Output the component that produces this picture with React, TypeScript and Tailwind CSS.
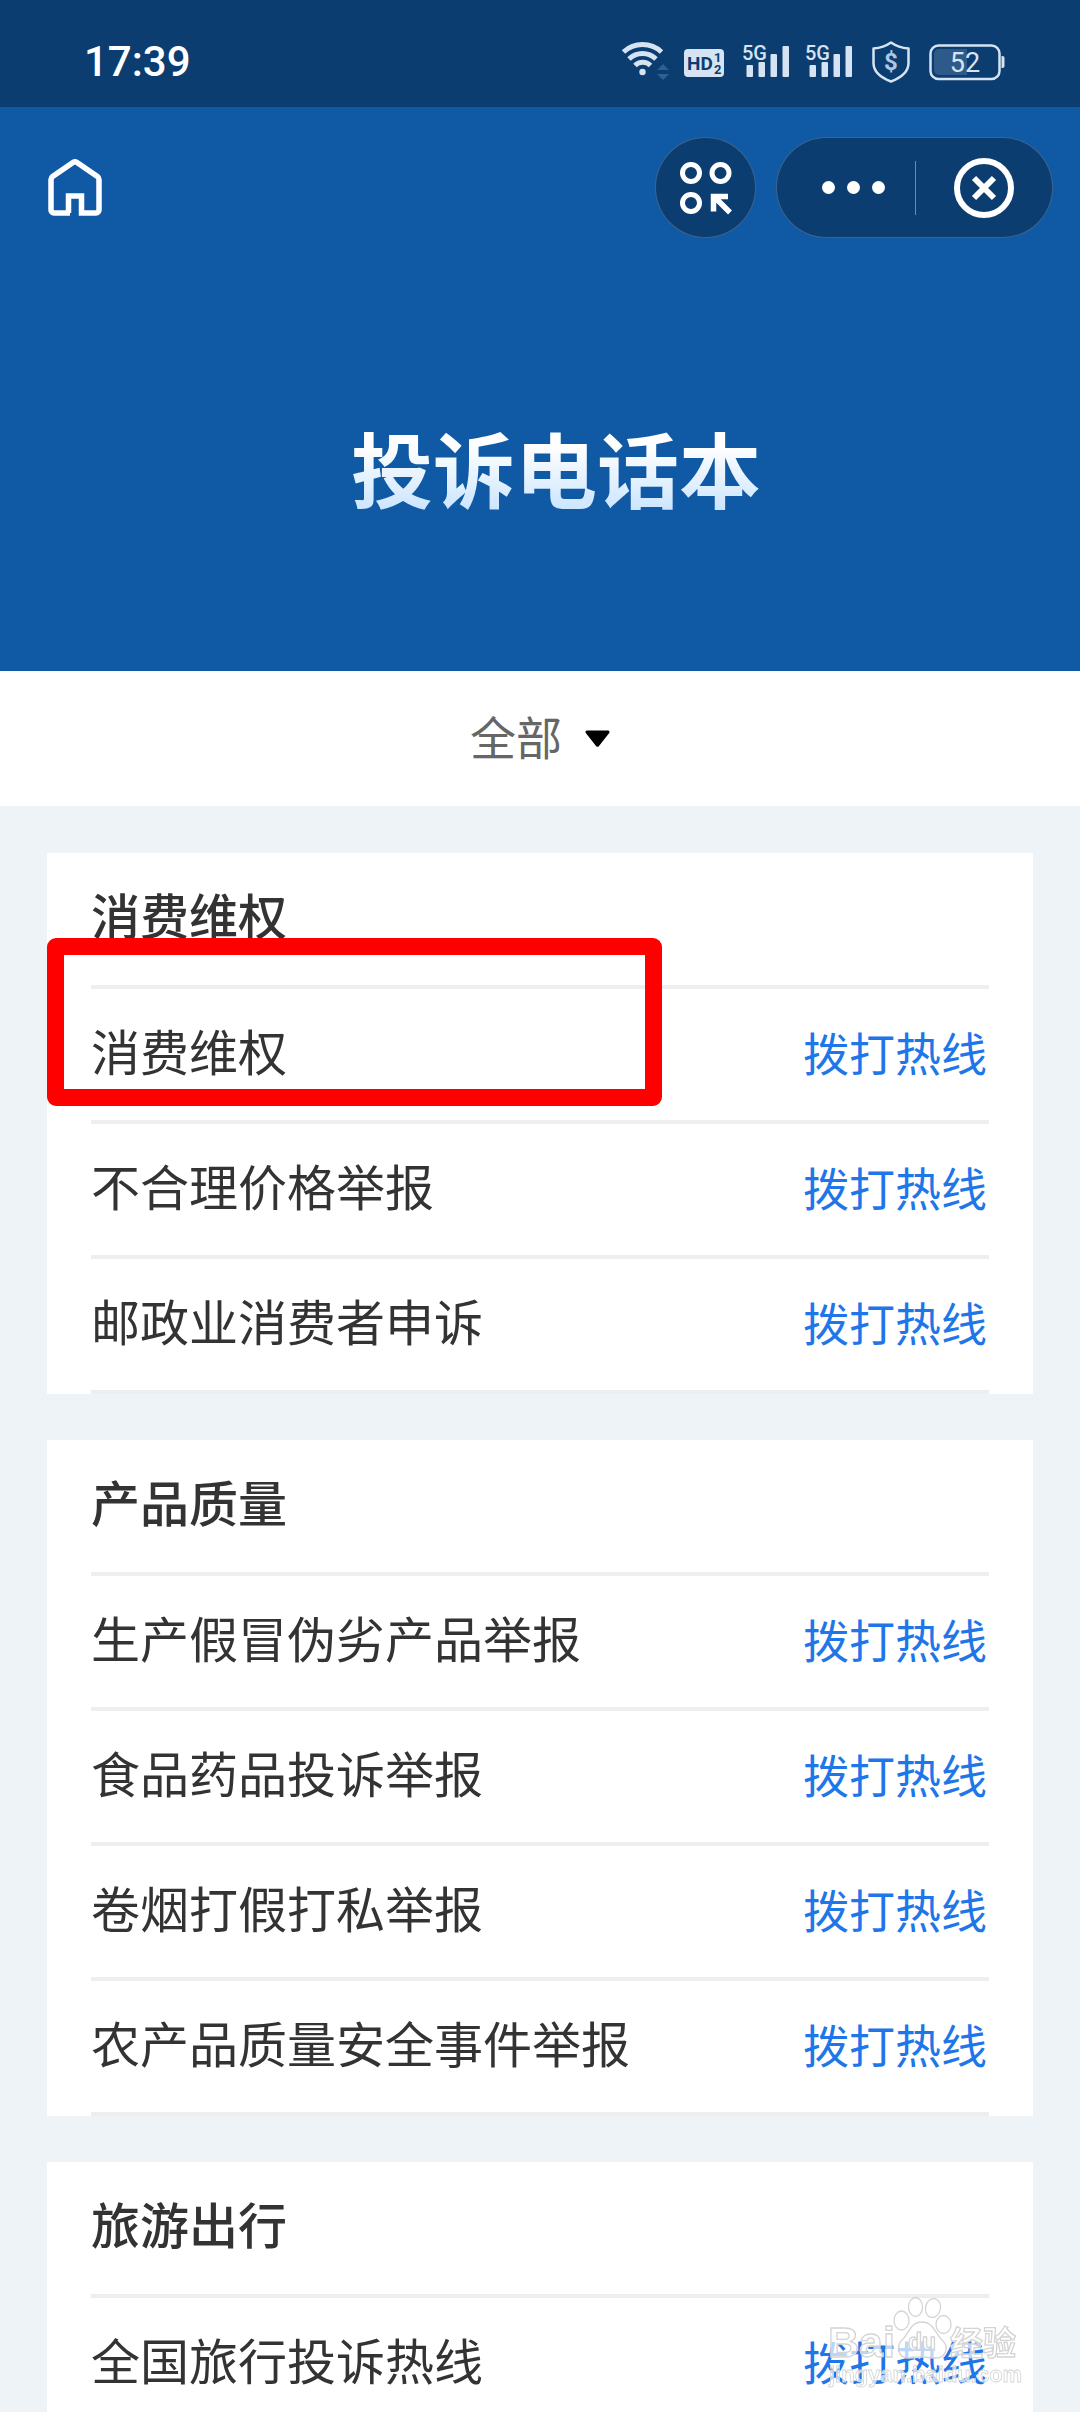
import { useState } from 'react';

const sections = [
  {
    title: '消费维权',
    highlight: true,
    items: ['消费维权', '不合理价格举报', '邮政业消费者申诉'],
  },
  {
    title: '产品质量',
    items: ['生产假冒伪劣产品举报', '食品药品投诉举报', '卷烟打假打私举报', '农产品质量安全事件举报'],
  },
  {
    title: '旅游出行',
    items: ['全国旅行投诉热线'],
  },
];

const WifiIcon = () => (
  <svg viewBox="0 0 48 42" className="w-12 h-[42px]" fill="none" stroke="#d6e3f3" strokeWidth="5" aria-hidden="true">
    <path d="M1.500 11a28 28 0 0 1 38 0" />
    <path d="M7 18a19.500 19.500 0 0 1 27 0" />
    <path d="M13 24.500a11 11 0 0 1 15.500 0" />
    <circle cx="20.500" cy="31" r="3.200" fill="#d6e3f3" stroke="none" />
    <path d="M35 29l6-6 6 6zM35 33l6 6 6-6z" fill="#2e5f94" stroke="none" />
  </svg>
);

const HdIcon = () => (
  <svg viewBox="0 0 40 42" className="w-10 h-[42px] ml-[14px]" aria-hidden="true">
    <rect y="8" width="40" height="28" rx="4" fill="#d6e3f3" />
    <g fill="#0b3d70" fontFamily="Roboto, sans-serif" fontWeight="700">
      <text x="3" y="29" fontSize="19">HD</text>
      <text x="30" y="21" fontSize="13">1</text>
      <text x="30" y="33" fontSize="13">2</text>
    </g>
  </svg>
);

const SignalIcon = ({ className }: { className: string }) => (
  <svg viewBox="0 0 47 42" className={className} fill="#d6e3f3" aria-hidden="true">
    <text x="-1" y="19" fontSize="20" fontWeight="500" fontFamily="Roboto, sans-serif">5G</text>
    <rect x="3.500" y="24" width="6.500" height="12" rx="1" />
    <rect x="15.500" y="21" width="6.500" height="15" rx="1" />
    <rect x="27.500" y="13" width="6.500" height="23" rx="1" />
    <rect x="39.500" y="5" width="6.500" height="31" rx="1" />
  </svg>
);

const ShieldIcon = () => (
  <svg viewBox="0 0 38 42" className="w-[38px] h-[42px] ml-[19px]" aria-hidden="true">
    <path
      d="M19 1.500C14 5 8 7 1.500 7.500V22c0 9 7 14.500 17.500 18.500C29.500 36.500 36.500 31 36.500 22V7.500C30 7 24 5 19 1.500z"
      fill="none"
      stroke="#d6e3f3"
      strokeWidth="2.500"
      strokeLinejoin="round"
    />
    <text x="19" y="29" textAnchor="middle" fontSize="24" fontWeight="700" fontFamily="Roboto, sans-serif" fill="#afc6e0">$</text>
  </svg>
);

const BatteryIcon = () => (
  <svg viewBox="0 0 77 42" className="w-[77px] h-[42px] ml-[19px]" aria-hidden="true">
    <rect x="1.500" y="4.500" width="69" height="33.500" rx="8" fill="none" stroke="#d6e3f3" strokeWidth="2.500" />
    <path d="M10 8h28v26H10a5 5 0 0 1-5-5V13a5 5 0 0 1 5-5z" fill="#2e5a89" />
    <path d="M72.500 15h1a2 2 0 0 1 2 2v8a2 2 0 0 1-2 2h-1z" fill="#d6e3f3" />
    <text x="36" y="31" textAnchor="middle" fontSize="27" fontFamily="Roboto, sans-serif" fill="#d6e3f3">52</text>
  </svg>
);

const StatusBar = () => (
  <div className="flex items-center justify-between h-[107px] bg-[#0b3d70] pl-[84px] pr-[74px] pt-[17px]">
    <span className="text-[42px] leading-[50px] font-medium text-white">17:39</span>
    <div className="flex items-center">
      <WifiIcon />
      <HdIcon />
      <SignalIcon className="w-[47px] h-[42px] ml-[19px]" />
      <SignalIcon className="w-[47px] h-[42px] ml-4" />
      <ShieldIcon />
      <BatteryIcon />
    </div>
  </div>
);

const NavBar = () => (
  <nav className="flex items-center justify-between pl-12 pr-[27px] pt-[30px]">
    <button aria-label="首页">
      <svg viewBox="0 0 54 58" className="w-[54px] h-[58px]" fill="none" stroke="white" strokeWidth="5.500">
        <path d="M22 54H6a3 3 0 0 1-3-3V20.500a4 4 0 0 1 1.600-3L24.600 3.700a4 4 0 0 1 4.800 0L49.400 17.500a4 4 0 0 1 1.600 3V51a3 3 0 0 1-3 3H33.500V37H20.500v17" />
      </svg>
    </button>
    <div className="flex gap-5">
      <button aria-label="小程序" className="flex items-center justify-center size-[101px] rounded-full bg-[#0b3d70] border border-white/20">
        <svg viewBox="0 0 54 54" className="size-[54px]" fill="none" stroke="white" strokeWidth="5">
          <circle cx="12" cy="12" r="8.500" />
          <circle cx="41.500" cy="12" r="8.500" />
          <circle cx="12" cy="42" r="8.500" />
          <path d="M49 35.500H34.500V50.500M35.500 36l15.500 15.500" strokeWidth="5.500" />
        </svg>
      </button>
      <div className="flex items-center w-[277px] h-[101px] rounded-full bg-[#0b3d70] border border-white/20">
        <button aria-label="更多" className="w-1/2 flex items-center justify-center gap-3 h-full pl-4">
          <span className="size-[13px] rounded-full bg-white" />
          <span className="size-[13px] rounded-full bg-white" />
          <span className="size-[13px] rounded-full bg-white" />
        </button>
        <span className="w-px h-[54px] bg-white/40" />
        <button aria-label="关闭" className="flex-1 flex items-center justify-center h-full">
          <svg viewBox="0 0 60 60" className="size-[60px]" fill="none" stroke="white" strokeWidth="6">
            <circle cx="30" cy="30" r="27" />
            <path d="M20 20l20 20M40 20L20 40" />
          </svg>
        </button>
      </div>
    </div>
  </nav>
);

const Watermark = () => (
  <svg viewBox="0 0 194 92" className="fixed right-[58px] bottom-6 w-[194px] h-[92px] pointer-events-none" aria-hidden="true">
    <g fill="white" fillOpacity="0.7" stroke="#d4d4d4" strokeWidth="1.300" fontFamily="'Liberation Sans', 'Noto Sans CJK SC', sans-serif" fontWeight="700">
      <ellipse cx="73.500" cy="24.500" rx="7.500" ry="9.500" />
      <ellipse cx="87.500" cy="11" rx="7" ry="9.500" />
      <ellipse cx="105" cy="12" rx="7.500" ry="9.500" transform="rotate(12 105 12)" />
      <ellipse cx="115.500" cy="28.500" rx="7.500" ry="9" />
      <path d="M94 26c-12 0-13 12-20 18-6 6-4 18 6 18 5 0 9-1 14-1s9 1 14 1c10 0 13-11 7-17-8-7-9-19-21-19z" />
      <text x="0" y="61" fontSize="43">Bai</text>
      <text x="94" y="54" fontSize="23" textAnchor="middle">du</text>
      <text x="122" y="59" fontSize="33">经验</text>
      <text x="1" y="86" fontSize="22" strokeWidth="0.800">jingyan.baidu.com</text>
    </g>
  </svg>
);

const App = () => {
  const [filter, setFilter] = useState('全部');
  const visible = sections.filter((s) => filter === '全部' || s.title === filter);

  return (
    <div className="min-h-screen bg-[#edf3f6] font-['Roboto','Noto_Sans_CJK_SC',sans-serif]">
      <StatusBar />

      <header className="h-[564px] bg-[#105aa5]">
        <NavBar />
        <h1 className="pt-44 pl-8 text-center text-[82px] leading-[120px] font-bold">
          <span className="bg-linear-to-b from-white from-20% to-[#cde6ff] to-85% bg-clip-text text-transparent">投诉电话本</span>
        </h1>
      </header>

      <div className="flex items-center justify-center h-[135px] bg-white">
        <div className="relative flex items-center">
          <select
            aria-label="分类"
            value={filter}
            onChange={(e) => setFilter(e.target.value)}
            className="appearance-none field-sizing-content pr-12 bg-transparent text-[46px] leading-[68px] text-[#666] outline-none"
          >
            <option>全部</option>
            {sections.map((s) => (
              <option key={s.title}>{s.title}</option>
            ))}
          </select>
          <svg viewBox="0 0 25 18" className="absolute right-0 w-[25px] h-[18px] pointer-events-none" aria-hidden="true">
            <path d="M2 0.500h21a1.500 1.500 0 0 1 1.200 2.400L14 16a2 2 0 0 1-3 0L0.800 2.900A1.500 1.500 0 0 1 2 0.500z" />
          </svg>
        </div>
      </div>

      <main className="flex flex-col gap-[46px] px-[47px] pt-[47px]">
        {visible.map((section) => (
          <section key={section.title} className="relative bg-white px-11">
            <h2 className="flex items-center h-[136px] border-b-4 border-[#eee] text-[49px] leading-[72px] font-medium text-[#333]">
              {section.title}
            </h2>
            <ul>
              {section.items.map((item) => (
                <li key={item} className="flex items-center justify-between h-[135px] border-b-4 border-[#eee] pr-0.5">
                  <span className="text-[49px] leading-[72px] text-[#333]">{item}</span>
                  <a href="#" className="text-[46px] leading-[68px] text-[#1f76e8]">拨打热线</a>
                </li>
              ))}
            </ul>
            {section.highlight && (
              <div className="absolute left-0 top-[85px] w-[615px] h-[168px] border-[17px] border-[#f00] rounded-[9px] pointer-events-none" />
            )}
          </section>
        ))}
      </main>

      <Watermark />
    </div>
  );
};

export default App;
